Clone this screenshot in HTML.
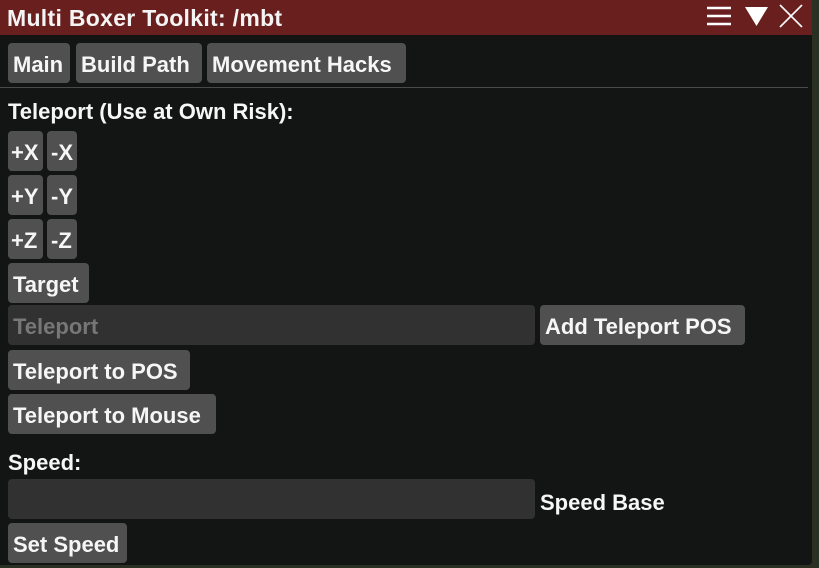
<!DOCTYPE html>
<html><head><meta charset="utf-8"><style>
html,body{margin:0;padding:0;width:819px;height:568px;overflow:hidden;background:#2b3122;font-family:"Liberation Sans",sans-serif;}
#win{position:absolute;left:0;top:0;width:812px;height:565px;background:#131414;border-bottom-right-radius:4px;}
#title{position:absolute;left:0;top:0;width:812px;height:35px;background:#6a1f1f;}
#title span{position:absolute;left:7px;top:5px;color:#f4f4f4;font-size:23px;font-weight:bold;letter-spacing:0.3px;}
.b{position:absolute;height:40px;background:#505050;border-radius:4px;color:#f6f6f6;font-size:22px;font-weight:bold;line-height:44px;box-sizing:border-box;padding-left:5px;white-space:nowrap;}
.in{position:absolute;height:40px;background:#313131;border-radius:4px;color:#777;font-size:22px;font-weight:bold;line-height:44px;padding-left:5px;box-sizing:border-box;}
.t{position:absolute;color:#f6f6f6;font-size:22px;font-weight:bold;white-space:nowrap;}
#sep{position:absolute;left:0;top:87px;width:808px;height:1px;background:#4a4a4a;}
</style></head><body>
<div id="win">
<div id="title"><span>Multi Boxer Toolkit: /mbt</span>
<svg style="position:absolute;left:700px;top:3px" width="110" height="28">
<g stroke="#fff" stroke-width="2.5"><line x1="7" y1="5" x2="31" y2="5"/><line x1="7" y1="13" x2="31" y2="13"/><line x1="7" y1="21" x2="31" y2="21"/></g>
<polygon points="45,4 68,4 56.5,23" fill="#fff"/>
<g stroke="#fff" stroke-width="1.6"><line x1="80" y1="2" x2="102" y2="24"/><line x1="102" y1="2" x2="80" y2="24"/></g>
</svg>
</div>
<div class="b" style="left:8px;top:43px;width:62px">Main</div>
<div class="b" style="left:76px;top:43px;width:126px">Build Path</div>
<div class="b" style="left:207px;top:43px;width:199px">Movement Hacks</div>
<div id="sep"></div>
<div class="t" style="left:8px;top:99px">Teleport (Use at Own Risk):</div>
<div class="b" style="left:8px;top:131px;width:35px;padding-left:3px">+X</div>
<div class="b" style="left:47px;top:131px;width:30px;padding-left:4px">-X</div>
<div class="b" style="left:8px;top:175px;width:35px;padding-left:3px">+Y</div>
<div class="b" style="left:47px;top:175px;width:30px;padding-left:4px">-Y</div>
<div class="b" style="left:8px;top:219px;width:35px;padding-left:3px">+Z</div>
<div class="b" style="left:47px;top:219px;width:30px;padding-left:4px">-Z</div>
<div class="b" style="left:8px;top:263px;width:81px">Target</div>
<div class="in" style="left:8px;top:305px;width:527px">Teleport</div>
<div class="b" style="left:540px;top:305px;width:205px">Add Teleport POS</div>
<div class="b" style="left:8px;top:350px;width:182px">Teleport to POS</div>
<div class="b" style="left:8px;top:394px;width:208px">Teleport to Mouse</div>
<div class="t" style="left:8px;top:450px">Speed:</div>
<div class="in" style="left:8px;top:479px;width:527px"></div>
<div class="t" style="left:540px;top:490px">Speed Base</div>
<div class="b" style="left:8px;top:523px;width:119px">Set Speed</div>
</div>
</body></html>
